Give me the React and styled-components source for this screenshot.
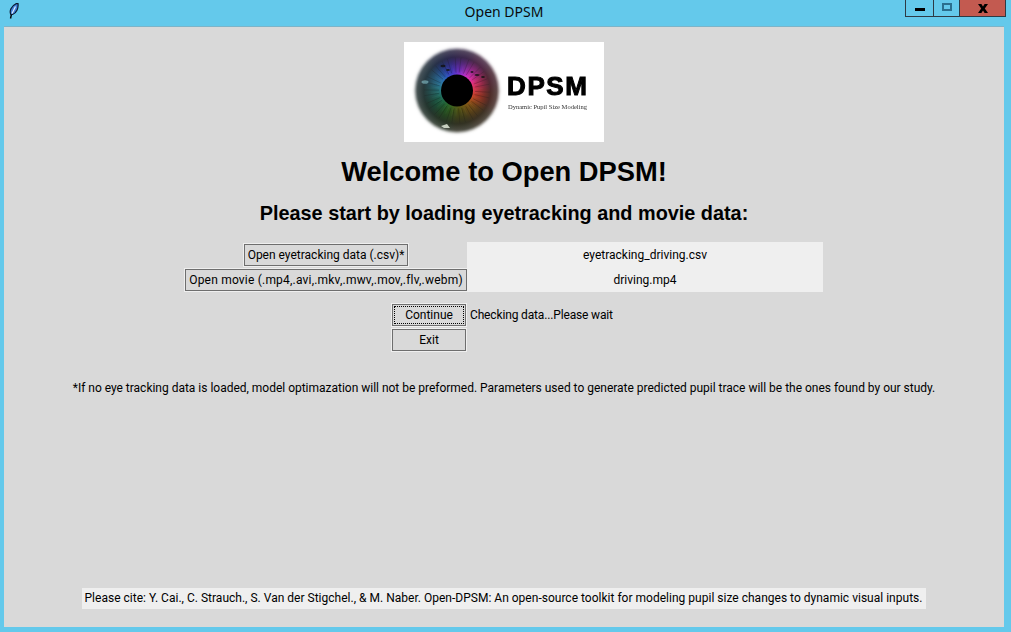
import React from 'react'
import styled, { createGlobalStyle } from 'styled-components'

const GlobalStyle = createGlobalStyle`
  html, body { margin: 0; padding: 0; background: #64c9eb; }
  body { font-family: Roboto, "Noto Sans", sans-serif; }
`

const WEDGES = [
  [0, '#8a30d8'], [28, '#e830c8'], [55, '#f03070'], [85, '#d8402c'], [120, '#8a5a12'],
  [155, '#5c5a14'], [190, '#2c6a22'], [225, '#1f6a4a'], [255, '#2a7a7a'], [285, '#2f80b0'],
  [315, '#2a50c8'], [340, '#4a30d8'], [360, '#8a30d8'],
]

const SPOTS = [[39, 24, 2.5, 1.3], [44, 28, 2, 0.9], [73, 33, 2.5, 1.1], [79, 35, 2, 0.9], [68, 30, 1.5, 0.9]]

function polar(r, deg) {
  const a = ((deg - 90) * Math.PI) / 180
  return [53 + r * Math.cos(a), 48.5 + r * Math.sin(a)]
}

function Feather() {
  return (
    <svg width="10" height="16" viewBox="0 0 10 16">
      <path d="M1.5 15.5 L2.5 11" stroke="#000" strokeWidth="1.4" fill="none" />
      <path d="M1.8 11.5 C0.2 8 2 3 7 0.7 L9 0.7 C9.6 5 7.5 10 3.5 11.5 Z" fill="#3f7fd8" stroke="#0b1830" strokeWidth="1.2" />
      <path d="M3 10.5 L6.5 3.5" stroke="#dcecff" strokeWidth="1.2" />
    </svg>
  )
}

function LogoEye() {
  const wedges = WEDGES.slice(0, -1).map(([from, color], i) => {
    const to = WEDGES[i + 1][0]
    const [x1, y1] = polar(48, from - 1)
    const [x2, y2] = polar(48, to + 1)
    return <path key={from} d={`M53 48.5 L${x1} ${y1} A48 48 0 0 1 ${x2} ${y2} Z`} fill={color} />
  })
  const fibers = []
  for (let i = 0; i < 60; i++) {
    const deg = i * 6 + (i % 4)
    const [x1, y1] = polar(18, deg)
    const [x2, y2] = polar(26 + (i * 7) % 14, deg)
    fibers.push(
      <line key={i} x1={x1} y1={y1} x2={x2} y2={y2}
        stroke={i % 2 ? '#000' : '#fff'} strokeOpacity={i % 2 ? 0.22 : 0.05} strokeWidth="1" />
    )
  }
  return (
    <svg width="100" height="100" viewBox="0 0 100 100">
      <defs>
        <filter id="soft"><feGaussianBlur stdDeviation="4" /></filter>
        <filter id="edge" x="-20%" y="-20%" width="140%" height="140%"><feGaussianBlur stdDeviation="1.8" /></filter>
        <filter id="fine"><feGaussianBlur stdDeviation="0.7" /></filter>
        <radialGradient id="shade" gradientUnits="userSpaceOnUse" cx="53" cy="48.5" r="44">
          <stop offset="0.36" stopColor="#000" stopOpacity="0" />
          <stop offset="0.55" stopColor="#1a1a1a" stopOpacity="0.35" />
          <stop offset="0.76" stopColor="#262626" stopOpacity="0.78" />
          <stop offset="0.9" stopColor="#4a4a4a" stopOpacity="0.85" />
          <stop offset="1" stopColor="#aaa" stopOpacity="0.9" />
        </radialGradient>
        <mask id="round">
          <circle cx="53" cy="48.5" r="42.5" fill="#fff" filter="url(#edge)" />
        </mask>
      </defs>
      <g mask="url(#round)">
        <g filter="url(#soft)">{wedges}</g>
        <g filter="url(#fine)">{fibers}</g>
        <circle cx="53" cy="48.5" r="46" fill="url(#shade)" />
        <g filter="url(#fine)">
          {SPOTS.map(([x, y, rx, ry]) => <ellipse key={x + y} cx={x} cy={y} rx={rx} ry={ry} fill="#111" opacity="0.8" />)}
          <path d="M37 84 L43 82 L46 86 L40 86 Z" fill="#dfe8d8" opacity="0.85" />
          <ellipse cx="21" cy="40" rx="3.5" ry="1.8" fill="#8fd0d8" opacity="0.55" />
        </g>
      </g>
      <circle cx="53" cy="48.5" r="16" fill="#000" />
    </svg>
  )
}

export default function App() {
  return (
    <>
      <GlobalStyle />
      <Window>
        <TitleBar>
          <AppIcon><Feather /></AppIcon>
          <Title>Open DPSM</Title>
          <Controls>
            <Control>
              <MinGlyph />
            </Control>
            <Control $width="25px">
              <MaxGlyph />
            </Control>
            <Control $width="45px" $close>
              <svg width="12" height="9" viewBox="0 0 12 9">
                <path d="M1 0 L4.4 0 L6 2.4 L7.6 0 L11 0 L7.8 4.5 L11 9 L7.6 9 L6 6.6 L4.4 9 L1 9 L4.2 4.5 Z" fill="#000" />
              </svg>
            </Control>
          </Controls>
        </TitleBar>
        <Client>
          <Logo>
            <LogoEye />
            <LogoText>
              <LogoName>DPSM</LogoName>
              <LogoSub>Dynamic Pupil Size Modeling</LogoSub>
            </LogoText>
          </Logo>
          <Heading>Welcome to Open DPSM!</Heading>
          <SubHeading>Please start by loading eyetracking and movie data:</SubHeading>
          <FormGrid>
            <Button>Open eyetracking data (.csv)*</Button>
            <FileName>eyetracking_driving.csv</FileName>
            <WideButton>Open movie (.mp4,.avi,.mkv,.mwv,.mov,.flv,.webm)</WideButton>
            <FileName>driving.mp4</FileName>
            <ActionButton><FocusLabel>Continue</FocusLabel></ActionButton>
            <Status>Checking data...Please wait</Status>
            <ActionButton>Exit</ActionButton>
          </FormGrid>
          <Note>*If no eye tracking data is loaded, model optimazation will not be preformed. Parameters used to generate predicted pupil trace will be the ones found by our study.</Note>
          <Citation>Please cite: Y. Cai., C. Strauch., S. Van der Stigchel., &amp; M. Naber. Open-DPSM: An open-source toolkit for modeling pupil size changes to dynamic visual inputs.</Citation>
        </Client>
      </Window>
    </>
  )
}

const Window = styled.div`
  width: 1011px;
  height: 632px;
  display: flex;
  flex-direction: column;
  background: #64c9eb;
  overflow: hidden;
`

const TitleBar = styled.div`
  height: 27px;
  flex: none;
  display: flex;
  align-items: flex-start;
  position: relative;
`

const AppIcon = styled.div`
  width: 10px;
  height: 16px;
  margin: 3px 0 0 9px;
`

const Title = styled.div`
  position: absolute;
  left: 0;
  right: 0;
  top: 2px;
  text-align: center;
  font-family: "Noto Sans", sans-serif;
  font-size: 14px;
  line-height: 19px;
  color: #0a0a0a;
  padding-right: 3px;
`

const Controls = styled.div`
  margin-left: auto;
  margin-right: 5px;
  display: flex;
  height: 17px;
  box-sizing: border-box;
  border: 1px solid #2e3a44;
  border-top: none;
  position: relative;
  z-index: 1;
`

const Control = styled.div`
  width: ${p => p.$width || '27px'};
  display: flex;
  align-items: center;
  justify-content: center;
  background: ${p => (p.$close ? '#c35a50' : 'transparent')};
  & + & { border-left: 1px solid #2e3a44; }
`

const MinGlyph = styled.span`
  width: 10px;
  height: 3px;
  background: #000;
  margin-top: 3px;
`

const MaxGlyph = styled.span`
  width: 6px;
  height: 4px;
  border: 2px solid #2b6f8e;
  margin-bottom: 2px;
`

const Client = styled.div`
  width: 1000px;
  height: 600px;
  margin-left: 4px;
  background: #d9d9d9;
  box-shadow: 0 -1px 0 #7db4c8;
  display: flex;
  flex-direction: column;
  align-items: center;
  box-sizing: border-box;
  padding-top: 15px;
  color: #000;
  font-size: 12px;
`

const Logo = styled.div`
  width: 200px;
  height: 100px;
  flex: none;
  background: #fff;
  display: flex;
`

const LogoText = styled.div`
  display: flex;
  flex-direction: column;
  margin-left: 3px;
  padding-top: 32px;
  filter: blur(0.3px);
`

const LogoName = styled.div`
  font-family: "Liberation Sans", Arial, sans-serif;
  font-weight: 700;
  font-size: 26px;
  line-height: 25px;
  letter-spacing: 1.6px;
  -webkit-text-stroke: 1px #000;
`

const LogoSub = styled.div`
  font-family: "Liberation Serif", serif;
  font-size: 6.5px;
  line-height: 9px;
  margin: 3px 0 0 1px;
  color: #333;
  white-space: nowrap;
`

const Heading = styled.h1`
  margin: 12px 0 0;
  font-family: "Liberation Sans", Arial, sans-serif;
  font-weight: 700;
  font-size: 27.3px;
  line-height: 35px;
`

const SubHeading = styled.h2`
  margin: 12px 0 0;
  font-family: "Liberation Sans", Arial, sans-serif;
  font-weight: 700;
  font-size: 19.85px;
  line-height: 24px;
`

const FormGrid = styled.div`
  display: grid;
  grid-template-columns: 282px 356px;
  grid-template-rows: 25px 25px 35px 25px;
  margin-top: 17px;
`

const Button = styled.div`
  height: 24px;
  box-sizing: border-box;
  padding: 0 4px;
  display: flex;
  align-items: center;
  justify-self: center;
  align-self: end;
  white-space: nowrap;
  background: #d9d9d9;
  border: 1px solid #efefef;
  box-shadow: inset 0 0 0 1px #6e6e6e;
`

const WideButton = styled(Button)`
  letter-spacing: 0.2px;
`

const FileName = styled.div`
  background: #efefef;
  display: flex;
  align-items: center;
  justify-content: center;
`

const ActionButton = styled(Button)`
  width: 76px;
  padding: 2px;
  justify-content: center;
  justify-self: end;
  grid-column: 1;
`

const FocusLabel = styled.span`
  flex: 1;
  align-self: stretch;
  display: flex;
  align-items: center;
  justify-content: center;
  border: 1px dotted #000;
`

const Status = styled.div`
  display: flex;
  align-items: center;
  height: 24px;
  align-self: end;
  padding-left: 3px;
  letter-spacing: -0.15px;
  white-space: nowrap;
`

const Note = styled.div`
  margin-top: 27px;
  line-height: 18px;
  letter-spacing: -0.012px;
  white-space: nowrap;
`

const Citation = styled.div`
  margin-top: auto;
  margin-bottom: 18px;
  background: #efefef;
  padding: 0 4px 0 3px;
  line-height: 21px;
  letter-spacing: 0.012px;
  white-space: nowrap;
`
